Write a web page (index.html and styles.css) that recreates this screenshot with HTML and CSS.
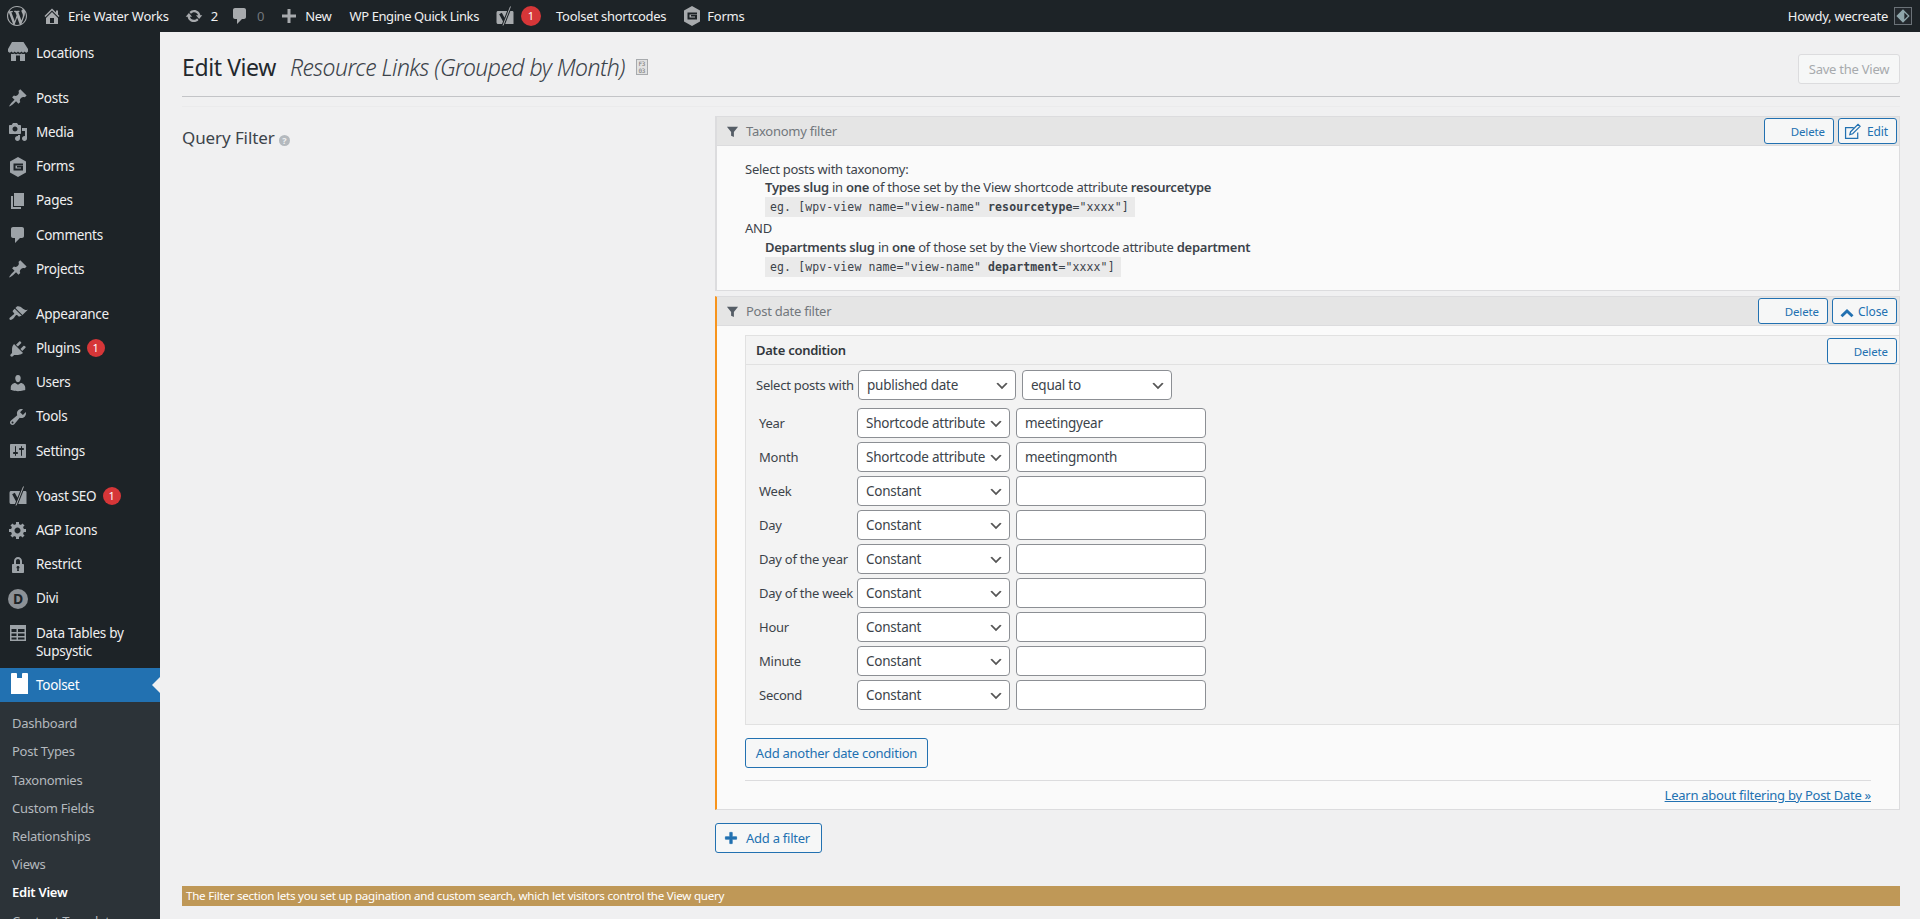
FILE: index.html
```html
<!DOCTYPE html>
<html>
<head>
  <meta charset="UTF-8" />
  <title>Edit View</title>
  <meta name="viewport" content="width=device-width, initial-scale=1" />
  <link rel="stylesheet" href="styles.css">
</head>
<body>
  <svg class="sprite" xmlns="http://www.w3.org/2000/svg">
    <symbol id="i-wp" viewBox="0 0 20 20"><path fill-rule="evenodd" d="M20 10c0-5.51-4.49-10-10-10C4.48 0 0 4.49 0 10c0 5.52 4.48 10 10 10 5.51 0 10-4.48 10-10zM7.78 15.37L4.37 6.22c.55-.02 1.17-.08 1.17-.08.5-.06.44-1.13-.06-1.11 0 0-1.45.11-2.37.11-.18 0-.37 0-.58-.01C4.12 2.69 6.87 1.11 10 1.11c2.33 0 4.45.87 6.05 2.34-.68-.11-1.65.39-1.65 1.58 0 .74.45 1.36.9 2.1.35.61.55 1.36.55 2.46 0 1.49-1.4 5-1.4 5l-3.03-8.37c.54-.02.82-.17.82-.17.5-.05.44-1.25-.06-1.22 0 0-1.44.12-2.38.12-.87 0-2.33-.12-2.33-.12-.5-.03-.56 1.2-.06 1.22l.92.08 1.26 3.41zM17.41 10c.24-.64.74-1.87.43-4.25.7 1.29 1.05 2.71 1.05 4.25 0 3.29-1.73 6.24-4.4 7.78.97-2.59 1.94-5.2 2.92-7.78zM6.1 18.09C3.12 16.65 1.11 13.53 1.11 10c0-1.3.23-2.48.72-3.59C3.25 10.3 4.67 14.2 6.1 18.09zm4.03-6.63l2.58 6.98c-.86.29-1.76.45-2.71.45-.79 0-1.57-.11-2.29-.33.81-2.38 1.62-4.74 2.42-7.1z"/></symbol>
    <symbol id="i-home" viewBox="0 0 20 20"><path fill-rule="evenodd" d="M16 8.5l1.53 1.53-1.06 1.06L10 4.62l-6.47 6.47-1.06-1.06L10 2.5l4 4v-2h2v4zm-6-2.46l6 5.99V18H4v-5.97zM12 17v-5H8v5h4z"/></symbol>
    <symbol id="i-update" viewBox="0 0 20 20"><path d="M10.2 3.28c3.53 0 6.43 2.61 6.92 6h2.08l-3.5 4-3.5-4h2.32c-.45-1.97-2.21-3.45-4.32-3.45-1.45 0-2.73.71-3.54 1.78L4.95 5.66C6.23 4.2 8.11 3.28 10.2 3.28zm-.4 13.44c-3.52 0-6.43-2.61-6.92-6H.8l3.5-4c1.17 1.33 2.33 2.67 3.5 4H5.48c.45 1.97 2.21 3.45 4.32 3.45 1.45 0 2.73-.71 3.54-1.78l1.71 1.95c-1.28 1.46-3.15 2.38-5.25 2.38z"/></symbol>
    <symbol id="i-comment" viewBox="0 0 20 20"><path d="M5 2h9c1.1 0 2 .9 2 2v7c0 1.1-.9 2-2 2h-2l-5 5v-5H5c-1.1 0-2-.9-2-2V4c0-1.1.9-2 2-2z"/></symbol>
    <symbol id="i-plus" viewBox="0 0 20 20"><path d="M17 8.500v3h-5.500V17h-3v-5.500H3v-3h5.500V3h3v5.500z"/></symbol>
    <symbol id="i-yoast" viewBox="0 0 20 20">
      <path d="M3.500 5H17c1 0 1.500.5 1.500 1.500V18H3.500C2 18 1.500 17.500 1.500 16V7C1.500 5.500 2 5 3.500 5z"/>
      <path fill="none" stroke="#1d2327" stroke-width="3" d="M5.500 7.500l4 7.500M15.500 .5L8 19.500"/>
      <path fill="none" stroke="#a7aaad" stroke-width="1" d="M15.500 .5L8 19.500"/>
    </symbol>
    <symbol id="i-forms" viewBox="0 0 20 20"><path fill-rule="evenodd" d="M10 0l8 4.500v11L10 20l-8-4.500v-11zM5.500 6.500h9.500v1.900H7.500v3.200h5.500v-1.200H9V9h6v4.400H5.500z"/></symbol>
    <symbol id="i-store" viewBox="0 0 20 20"><path d="M4 0h11.500L20 7v2.500c-1 1.500-2.500 1.500-3.300 0-.8 1.500-2.500 1.500-3.300 0-.8 1.500-2.500 1.500-3.400 0-.8 1.500-2.500 1.500-3.300 0-.8 1.500-2.500 1.500-3.300 0-.8 1.500-2.300 1.500-3.400 0V7z"/><path d="M3 11.800c1.200.5 2 .4 3.400-.2 1 .7 2.300.7 3.500 0 1.100.7 2.400.7 3.500 0 1.300.6 2.300.7 3.600.2V19h-5v-5.500H8V19H3z"/></symbol>
    <symbol id="i-post" viewBox="0 0 20 20"><path d="M10.440 3.020l1.820-1.820 6.360 6.350-1.830 1.820c-1.050-.68-2.480-.57-3.410.36l-.75.75c-.92.93-1.040 2.350-.35 3.410l-1.830 1.820-2.410-2.410-2.800 2.790c-.42.42-3.380 2.710-3.800 2.290s1.860-3.390 2.280-3.810l2.790-2.790L4.100 9.360l1.830-1.820c1.050.69 2.480.57 3.400-.36l.75-.75c.93-.92 1.050-2.350.36-3.410z"/></symbol>
    <symbol id="i-media" viewBox="0 0 20 20"><path fill-rule="evenodd" d="M13 11V4c0-.55-.45-1-1-1h-1.670L9 1H5L3.670 3H2c-.55 0-1 .45-1 1v7c0 .55.45 1 1 1h10c.55 0 1-.45 1-1zM7 4.500c1.380 0 2.500 1.120 2.500 2.500S8.380 9.500 7 9.500 4.500 8.380 4.500 7 5.620 4.500 7 4.500zM14 6h5v10.500c0 1.380-1.120 2.500-2.500 2.500S14 17.880 14 16.500s1.120-2.500 2.500-2.500c.17 0 .34.02.5.05V9h-3V6zm-4 8.050V13h2v3.500c0 1.380-1.120 2.500-2.500 2.500S7 17.880 7 16.500 8.120 14 9.500 14c.17 0 .34.02.5.05z"/></symbol>
    <symbol id="i-page" viewBox="0 0 20 20"><path d="M6 15V2h10v13H6zm-1 1h8v2H3V5h2v11z"/></symbol>
    <symbol id="i-brush" viewBox="0 0 20 20"><path d="M14.480 11.060L7.410 3.990l1.500-1.500c.5-.56 2.300-.47 3.510.32 1.210.8 1.430 1.280 2.910 2.100 1.180.64 2.450 1.260 4.450.85zm-.71.71L6.700 4.700 4.930 6.470c-.39.39-.39 1.020 0 1.410l1.060 1.060c.39.39.39 1.030 0 1.420-.6.6-1.430 1.110-2.210 1.690-.35.26-.7.53-1.010.84C1.430 13.230.99 14.870 1.700 15.580c.71.71 2.350.27 3.690-1.070.31-.31.58-.66.84-1.010.58-.78 1.090-1.610 1.690-2.210.39-.39 1.020-.39 1.410 0l1.060 1.060c.39.39 1.020.39 1.410 0z"/></symbol>
    <symbol id="i-plug" viewBox="0 0 20 20"><path d="M13.110 4.360L9.870 7.600 8 5.730l3.240-3.240c.35-.34 1.050-.2 1.560.32.52.51.66 1.210.31 1.550zm-8 1.770l.91-1.120 9.010 9.010-1.190.84c-.71.71-2.630 1.160-3.820 1.160H6.140L4.900 17.260c-.59.59-1.540.59-2.120 0-.59-.58-.59-1.530 0-2.120l1.240-1.240v-3.880c0-1.130.4-3.190 1.090-3.890zm7.260 3.970l3.240-3.240c.34-.35 1.040-.21 1.550.31.52.51.66 1.210.31 1.550l-3.240 3.250z"/></symbol>
    <symbol id="i-user" viewBox="0 0 20 20"><path d="M10 9.250c-2.270 0-2.730-3.440-2.730-3.440C7 4.020 7.820 2 9.970 2c2.160 0 2.980 2.020 2.710 3.810 0 0-.41 3.440-2.68 3.440zm0 2.570L12.720 10c2.390 0 4.520 2.330 4.520 4.530v2.490s-3.650 1.130-7.240 1.130c-3.650 0-7.240-1.130-7.240-1.130v-2.490c0-2.250 1.940-4.480 4.470-4.480z"/></symbol>
    <symbol id="i-tool" viewBox="0 0 20 20"><path fill-rule="evenodd" d="M16.680 9.770c-1.340 1.340-3.300 1.670-4.950.99l-5.410 6.520c-.99.99-2.590.99-3.580 0s-.99-2.59 0-3.570l6.520-5.420c-.68-1.650-.35-3.610.99-4.950 1.280-1.280 3.120-1.620 4.720-1.060l-2.890 2.890 2.820 2.820 2.860-2.870c.53 1.580.18 3.390-1.080 4.650zM3.810 16.210c.4.39 1.040.39 1.430 0 .4-.4.4-1.040 0-1.430-.39-.4-1.030-.4-1.430 0-.39.39-.39 1.030 0 1.430z"/></symbol>
    <symbol id="i-settings" viewBox="0 0 20 20"><path fill-rule="evenodd" d="M18 16V4c0-.55-.45-1-1-1H3c-.55 0-1 .45-1 1v12c0 .55.45 1 1 1h14c.55 0 1-.45 1-1zM8 11h1c.55 0 1 .45 1 1s-.45 1-1 1H8v1.500c0 .28-.22.5-.5.5s-.5-.22-.5-.5V13H6c-.55 0-1-.45-1-1s.45-1 1-1h1V5.500c0-.28.22-.5.5-.5s.5.22.5.5V11zm5-2h-1c-.55 0-1-.45-1-1s.45-1 1-1h1V5.500c0-.28.22-.5.5-.5s.5.22.5.5V7h1c.55 0 1 .45 1 1s-.45 1-1 1h-1v5.500c0 .28-.22.5-.5.5s-.5-.22-.5-.5V9z"/></symbol>
    <symbol id="i-gear" viewBox="0 0 20 20"><path fill-rule="evenodd" d="M18 12h-2.180c-.17.7-.44 1.350-.81 1.930l1.540 1.540-2.100 2.100-1.540-1.540c-.58.36-1.230.63-1.910.79V19H8v-2.180c-.68-.16-1.330-.43-1.910-.79l-1.540 1.540-2.120-2.120 1.540-1.540c-.36-.58-.63-1.230-.79-1.910H1V9.030h2.170c.16-.7.44-1.350.8-1.940L2.430 5.550l2.100-2.100 1.540 1.540c.58-.37 1.240-.64 1.930-.81V2h3v2.180c.68.16 1.330.43 1.910.79l1.540-1.540 2.120 2.120-1.540 1.540c.36.59.64 1.240.8 1.940H18V12zm-8.500 1.500c1.660 0 3-1.340 3-3s-1.340-3-3-3-3 1.340-3 3 1.340 3 3 3z"/></symbol>
    <symbol id="i-lock" viewBox="0 0 20 20"><path fill-rule="evenodd" d="M14 9h1c.55 0 1 .45 1 1v7c0 .55-.45 1-1 1H5c-.55 0-1-.45-1-1v-7c0-.55.45-1 1-1h1V6c0-2.210 1.790-4 4-4s4 1.790 4 4v3zm-2 0V6c0-1.100-.9-2-2-2s-2 .9-2 2v3h4zm-1 7l-.36-2.150c.51-.24.86-.75.86-1.350 0-.83-.67-1.500-1.500-1.500s-1.500.67-1.500 1.500c0 .6.35 1.110.86 1.350L9 16h2z"/></symbol>
    <symbol id="i-table" viewBox="0 0 20 20"><path fill-rule="evenodd" d="M2 2h16v16H2zM3.500 6v3h5V6zm6.500 0v3h6.500V6zM3.500 10.500v2.500h5v-2.500zm6.500 0v2.500h6.500v-2.500zM3.500 14.500v2h5v-2zm6.500 0v2h6.500v-2z"/></symbol>
    <symbol id="i-toolset" viewBox="0 0 17 21"><path d="M0 1.200C0 .4.4 0 1.200 0h3.600c.8 0 1.200.4 1.200 1.200V5h5V1.200c0-.8.4-1.200 1.200-1.200h3.600c.8 0 1.200.4 1.200 1.200V21H0z"/></symbol>
    <symbol id="i-funnel" viewBox="0 0 14 14"><path d="M1 2h12L8.500 7.500V13l-3-1.500V7.500z"/></symbol>
    <symbol id="i-edit" viewBox="0 0 20 20"><path fill="none" stroke="currentColor" stroke-width="1.300" d="M15.500 11v6.300H2.700V6h8.500M8 10.200L15.800 2.400l2.200 2.200-7.800 7.800-3 .8z"/></symbol>
    <symbol id="i-chevron" viewBox="0 0 14 10"><path d="M7 1l6.500 6.300-2 2L7 5 2.500 9.300l-2-2z"/></symbol>
  </svg>

  <header class="adminbar">
    <div class="bar-group">
      <svg class="bar-ico bar-logo"><use href="#i-wp"/></svg>
      <svg class="bar-ico bar-home"><use href="#i-home"/></svg>
      <span class="bar-site">Erie Water Works</span>
      <svg class="bar-ico bar-update"><use href="#i-update"/></svg>
      <span class="bar-count">2</span>
      <svg class="bar-ico bar-comment"><use href="#i-comment"/></svg>
      <span class="bar-zero">0</span>
      <svg class="bar-ico bar-plus"><use href="#i-plus"/></svg>
      <span class="bar-new">New</span>
      <span class="bar-engine">WP Engine Quick Links</span>
      <svg class="bar-ico bar-yoast"><use href="#i-yoast"/></svg>
      <span class="badge bar-badge">1</span>
      <span class="bar-shortcodes">Toolset shortcodes</span>
      <svg class="bar-ico bar-forms"><use href="#i-forms"/></svg>
      <span>Forms</span>
    </div>
    <div class="bar-group">
      <span>Howdy, wecreate</span>
      <span class="avatar"><svg viewBox="0 0 18 18"><path fill="#8fa6ab" fill-rule="evenodd" d="M9 1.500L16.500 9 9 16.500 1.500 9zM10.500 5v8l4-4z"/></svg></span>
    </div>
  </header>

  <div class="shell">
    <nav class="sidebar">
      <a class="menu-item"><svg class="menu-ico store-ico"><use href="#i-store"/></svg>Locations</a>
      <div class="menu-sep"></div>
      <a class="menu-item"><svg class="menu-ico"><use href="#i-post"/></svg>Posts</a>
      <a class="menu-item"><svg class="menu-ico"><use href="#i-media"/></svg>Media</a>
      <a class="menu-item"><svg class="menu-ico"><use href="#i-forms"/></svg>Forms</a>
      <a class="menu-item"><svg class="menu-ico"><use href="#i-page"/></svg>Pages</a>
      <a class="menu-item"><svg class="menu-ico"><use href="#i-comment"/></svg>Comments</a>
      <a class="menu-item"><svg class="menu-ico"><use href="#i-post"/></svg>Projects</a>
      <div class="menu-sep"></div>
      <a class="menu-item"><svg class="menu-ico"><use href="#i-brush"/></svg>Appearance</a>
      <a class="menu-item"><svg class="menu-ico"><use href="#i-plug"/></svg>Plugins <span class="badge">1</span></a>
      <a class="menu-item"><svg class="menu-ico"><use href="#i-user"/></svg>Users</a>
      <a class="menu-item"><svg class="menu-ico"><use href="#i-tool"/></svg>Tools</a>
      <a class="menu-item"><svg class="menu-ico"><use href="#i-settings"/></svg>Settings</a>
      <div class="menu-sep"></div>
      <a class="menu-item"><svg class="menu-ico"><use href="#i-yoast"/></svg>Yoast SEO <span class="badge">1</span></a>
      <a class="menu-item"><svg class="menu-ico"><use href="#i-gear"/></svg>AGP Icons</a>
      <a class="menu-item"><svg class="menu-ico"><use href="#i-lock"/></svg>Restrict</a>
      <a class="menu-item"><span class="divi-ico">D</span>Divi</a>
      <a class="menu-item menu-tall"><svg class="menu-ico"><use href="#i-table"/></svg><span>Data Tables by<br>Supsystic</span></a>
      <a class="menu-item menu-current"><svg class="menu-ico toolset-ico"><use href="#i-toolset"/></svg>Toolset</a>
      <ul class="submenu">
        <li>Dashboard</li>
        <li>Post Types</li>
        <li>Taxonomies</li>
        <li>Custom Fields</li>
        <li>Relationships</li>
        <li>Views</li>
        <li class="sub-current">Edit View</li>
        <li>Content Templates</li>
      </ul>
    </nav>

    <main class="content">
      <div class="page-head">
        <h1>Edit View</h1>
        <span class="view-title">Resource Links (Grouped by Month)</span>
        <span class="id-ico">F3<br>03</span>
        <button type="button" class="save-btn">Save the View</button>
      </div>
      <div class="head-line"></div>

      <section class="filter-section">
        <h2>Query Filter <span class="help-ico">?</span></h2>

        <div class="filter-col">
          <div class="panel">
            <div class="panel-head">
              <svg class="funnel"><use href="#i-funnel"/></svg>
              <span class="panel-title">Taxonomy filter</span>
              <button type="button" class="btn btn-delete">Delete</button>
              <button type="button" class="btn btn-edit"><svg><use href="#i-edit"/></svg>Edit</button>
            </div>
            <div class="panel-body summary">
              <p>Select posts with taxonomy:</p>
              <p class="indent"><strong>Types slug</strong> in <strong>one</strong> of those set by the View shortcode attribute <strong>resourcetype</strong></p>
              <code>eg. [wpv-view name="view-name" <strong>resourcetype</strong>="xxxx"]</code>
              <p class="and">AND</p>
              <p class="indent"><strong>Departments slug</strong> in <strong>one</strong> of those set by the View shortcode attribute <strong>department</strong></p>
              <code>eg. [wpv-view name="view-name" <strong>department</strong>="xxxx"]</code>
            </div>
          </div>

          <div class="panel panel-open">
            <div class="panel-head">
              <svg class="funnel"><use href="#i-funnel"/></svg>
              <span class="panel-title">Post date filter</span>
              <button type="button" class="btn btn-delete">Delete</button>
              <button type="button" class="btn btn-close"><svg><use href="#i-chevron"/></svg>Close</button>
            </div>
            <div class="panel-body editor">
              <div class="date-box">
                <div class="date-head">
                  <strong>Date condition</strong>
                  <button type="button" class="btn btn-delete">Delete</button>
                </div>
                <div class="date-body">
                  <div class="date-first">
                    <label>Select posts with</label>
                    <select class="sel-type"><option>published date</option></select>
                    <select class="sel-compare"><option>equal to</option></select>
                  </div>
                  <div class="date-row"><label>Year</label><select><option>Shortcode attribute</option></select><input type="text" value="meetingyear"></div>
                  <div class="date-row"><label>Month</label><select><option>Shortcode attribute</option></select><input type="text" value="meetingmonth"></div>
                  <div class="date-row"><label>Week</label><select><option>Constant</option></select><input type="text"></div>
                  <div class="date-row"><label>Day</label><select><option>Constant</option></select><input type="text"></div>
                  <div class="date-row"><label>Day of the year</label><select><option>Constant</option></select><input type="text"></div>
                  <div class="date-row"><label>Day of the week</label><select><option>Constant</option></select><input type="text"></div>
                  <div class="date-row"><label>Hour</label><select><option>Constant</option></select><input type="text"></div>
                  <div class="date-row"><label>Minute</label><select><option>Constant</option></select><input type="text"></div>
                  <div class="date-row"><label>Second</label><select><option>Constant</option></select><input type="text"></div>
                </div>
              </div>
              <button type="button" class="btn btn-add-date">Add another date condition</button>
              <div class="learn-row"><a href="#">Learn about filtering by Post Date »</a></div>
            </div>
          </div>

          <button type="button" class="btn btn-add-filter"><svg><use href="#i-plus"/></svg>Add a filter</button>
        </div>
      </section>

      <div class="notice">The Filter section lets you set up pagination and custom search, which let visitors control the View query</div>
    </main>
  </div>
</body>
</html>
```

FILE: styles.css
```css
html, body {
  height: 100%;
}

body {
  margin: 0;
  height: 919px;
  overflow: hidden;
  background-color: #f0f0f1;
  color: #3c434a;
  font-family: "Noto Sans", sans-serif;
  font-size: 13px;
  letter-spacing: -0.25px;
}

.sprite {
  display: none;
}

.badge {
  display: inline-block;
  width: 18px;
  height: 18px;
  border-radius: 50%;
  background-color: #d63638;
  color: #fff;
  font-size: 11px;
  line-height: 18px;
  text-align: center;
  margin-left: 3px;
  letter-spacing: 0;
}

/* top bar */
.adminbar {
  height: 32px;
  background-color: #1d2327;
  color: #f0f0f1;
  display: flex;
  justify-content: space-between;
  align-items: center;
  padding: 0 8px 0 7px;
}

.bar-group {
  display: flex;
  align-items: center;
}

.bar-ico {
  width: 20px;
  height: 20px;
  fill: #a7aaad;
  flex: none;
}

.bar-home {
  margin-left: 15px;
  margin-right: 6px;
}

.bar-update {
  width: 18px;
  height: 18px;
  margin-left: 16px;
  margin-right: 8px;
}

.bar-count {
  margin-right: 12px;
}

.bar-comment {
  margin-right: 7px;
}

.bar-zero {
  color: #72777c;
  margin-right: 15px;
}

.bar-plus {
  margin-right: 6px;
}

.bar-new {
  margin-right: 18px;
}

.bar-engine {
  margin-right: 16px;
  letter-spacing: -0.42px;
}

.bar-yoast {
  margin-right: 6px;
}

.bar-badge {
  width: 20px;
  height: 20px;
  line-height: 20px;
  margin-left: 0;
  margin-right: 15px;
}

.bar-shortcodes {
  margin-right: 16px;
}

.bar-forms {
  margin-right: 5px;
}

.avatar {
  width: 16px;
  height: 16px;
  margin-left: 6px;
  border: 1px solid #6b7278;
  background-color: #23282d;
  display: block;
}

.avatar svg {
  display: block;
  width: 16px;
  height: 16px;
}

/* left menu */
.shell {
  display: grid;
  grid-template-columns: 160px 1fr;
  height: 887px;
}

.sidebar {
  background-color: #1d2327;
  padding-top: 4px;
  overflow: hidden;
}

.menu-item {
  display: flex;
  align-items: center;
  box-sizing: border-box;
  height: 34.2px;
  padding: 0 0 1px 36px;
  position: relative;
  color: #f0f0f1;
  font-size: 13.5px;
  letter-spacing: -0.3px;
  white-space: pre;
}

.menu-ico {
  position: absolute;
  left: 8px;
  top: 7px;
  width: 20px;
  height: 20px;
  fill: #9ca2a7;
}

.store-ico {
  top: 6px;
}

.menu-sep {
  height: 11px;
}

.menu-tall {
  height: 52px;
  line-height: 18px;
}

.divi-ico {
  position: absolute;
  left: 8px;
  top: 7px;
  width: 20px;
  height: 20px;
  border-radius: 50%;
  background-color: #8c9196;
  color: #1d2327;
  font-size: 14px;
  font-weight: 700;
  line-height: 20px;
  text-align: center;
}

.menu-current {
  background-color: #2271b1;
  color: #fff;
}

.menu-current::after {
  content: "";
  position: absolute;
  right: 0;
  top: 9px;
  border: 8px solid transparent;
  border-left-width: 0;
  border-right-color: #f0f0f1;
}

.toolset-ico {
  left: 11px;
  top: 5px;
  width: 17px;
  height: 21px;
  fill: #fff;
}

.submenu {
  list-style: none;
  margin: 0;
  padding: 7px 0 0;
  background-color: #2c3338;
  color: #b4b9be;
}

.submenu li {
  height: 28.2px;
  line-height: 28px;
  padding-left: 12px;
}

.submenu .sub-current {
  color: #fff;
  font-weight: 600;
}

/* page */
.content {
  padding: 22px 20px 0 22px;
  overflow: hidden;
}

.page-head {
  display: flex;
  align-items: center;
  height: 30px;
}

h1 {
  margin: 0 0 5px;
  font-size: 23px;
  font-weight: 400;
  color: #23282d;
  letter-spacing: -0.4px;
}

.view-title {
  margin: 0 0 5px 14px;
  font-size: 23px;
  font-style: italic;
  font-weight: 300;
  color: #3c434a;
  letter-spacing: -0.54px;
}

.id-ico {
  width: 10px;
  height: 14px;
  margin: 0 0 4px 11px;
  border: 1px solid #a7aaad;
  background-color: #e2e2e2;
  color: #777;
  font-family: "DejaVu Sans Mono", monospace;
  font-size: 6px;
  line-height: 7px;
  letter-spacing: -0.2px;
  text-align: center;
}

.save-btn {
  margin-left: auto;
  width: 102px;
  height: 30px;
  padding: 0;
  border: 1px solid #dcdcde;
  border-radius: 3px;
  background-color: #f6f7f7;
  color: #a7aaad;
  font: inherit;
  letter-spacing: inherit;
}

.head-line {
  height: 9px;
  margin-top: 12px;
  border-top: 1px solid #c3c4c7;
  border-bottom: 1px solid #ebebec;
}

.filter-section {
  display: grid;
  grid-template-columns: 533px 1fr;
  margin-top: 9px;
}

h2 {
  margin: 10px 0 0;
  font-size: 17px;
  font-weight: 400;
  color: #3c434a;
  letter-spacing: -0.1px;
}

.help-ico {
  display: inline-block;
  width: 11px;
  height: 11px;
  border-radius: 50%;
  background-color: #b4b9be;
  color: #f0f0f1;
  font-size: 9px;
  font-weight: 700;
  line-height: 11px;
  text-align: center;
  letter-spacing: 0;
  vertical-align: 0;
}

.panel {
  border: 1px solid #dcdcde;
  border-left-width: 2px;
  background-color: #fafafa;
  margin-bottom: 5px;
}

.panel-open {
  border-left: 2px solid #f7941d;
  margin-bottom: 13px;
}

.panel-head {
  display: flex;
  align-items: center;
  gap: 4px;
  height: 28px;
  padding-right: 2px;
  background-color: #e5e5e5;
  border-bottom: 1px solid #dcdcde;
}

.funnel {
  width: 13px;
  height: 13px;
  margin-left: 9px;
  margin-right: 3px;
  margin-top: 1px;
  fill: #555d66;
}

.panel-title {
  margin-right: auto;
  color: #72777c;
}

.btn {
  height: 26px;
  padding: 0;
  border: 1px solid #2271b1;
  border-radius: 3px;
  background-color: #f6f7f7;
  color: #2271b1;
  font: inherit;
  font-size: 12px;
  letter-spacing: -0.1px;
  display: inline-flex;
  align-items: center;
  justify-content: flex-end;
  box-sizing: border-box;
}

.btn-delete {
  width: 70px;
  padding-right: 8px;
  font-size: 11.5px;
}

.btn-edit {
  width: 59px;
  padding-right: 8px;
}

.btn-edit svg {
  width: 19px;
  height: 19px;
  margin-right: 5px;
  color: #2271b1;
}

.btn-close {
  width: 65px;
  padding-right: 8px;
}

.btn-close svg {
  width: 14px;
  height: 10px;
  margin: 3px 4px 0 0;
  fill: #2271b1;
}

.summary {
  height: 144px;
  box-sizing: border-box;
  padding: 14px 0 0 28px;
}

.summary p {
  margin: 0;
  line-height: 18px;
}

.summary .indent {
  margin-left: 20px;
  line-height: 19px;
}

.summary .and {
  line-height: 20px;
}

.summary strong {
  font-weight: 600;
}

.summary code {
  display: table;
  margin: 0 0 1px 20px;
  padding: 0 6px 0 5px;
  height: 20px;
  line-height: 20px;
  background-color: #eaeaea;
  font-family: "DejaVu Sans Mono", monospace;
  font-size: 11.5px;
  letter-spacing: 0.11px;
}

.editor {
  height: 483px;
  box-sizing: border-box;
  padding: 9px 0 0 28px;
}

.date-box {
  height: 390px;
  box-sizing: border-box;
  border: 1px solid #e1e1e1;
  border-right: 0;
  background-color: #f3f3f3;
}

.date-head {
  display: flex;
  justify-content: space-between;
  align-items: center;
  height: 28px;
  padding: 0 2px 0 10px;
  border-bottom: 1px solid #e1e1e1;
}

.date-head .btn {
  margin-top: 2px;
}

.date-head strong {
  font-weight: 600;
  color: #32373c;
}

.date-body {
  padding: 5px 0 0 10px;
}

.date-first,
.date-row {
  display: flex;
  align-items: center;
}

.date-first {
  gap: 6px;
  margin-bottom: 8px;
}

.date-first label {
  width: 96px;
  white-space: nowrap;
}

.date-row {
  margin-bottom: 4px;
  padding-left: 3px;
}

.date-row label {
  width: 98px;
  white-space: nowrap;
}

select,
input {
  box-sizing: border-box;
  height: 30px;
  margin: 0;
  padding: 0 8px;
  border: 1px solid #8c8f94;
  border-radius: 4px;
  background-color: #fff;
  color: #3c434a;
  font: inherit;
  font-size: 13.5px;
  letter-spacing: inherit;
}

select {
  appearance: none;
  padding-right: 20px;
  background-image: url("data:image/svg+xml;charset=US-ASCII,%3Csvg%20width%3D%2220%22%20height%3D%2220%22%20xmlns%3D%22http%3A%2F%2Fwww.w3.org%2F2000%2Fsvg%22%3E%3Cpath%20d%3D%22M5%206l5%205%205-5%202%201-7%207-7-7%202-1z%22%20fill%3D%22%23555%22%2F%3E%3C%2Fsvg%3E");
  background-repeat: no-repeat;
  background-position: right 5px top 55%;
  background-size: 16px 16px;
}

.date-row select {
  width: 153px;
}

.date-row input {
  width: 190px;
  margin-left: 6px;
}

.date-first .sel-type {
  width: 158px;
}

.date-first .sel-compare {
  width: 150px;
}

.btn-add-date {
  height: 30px;
  width: 183px;
  margin-top: 13px;
  justify-content: center;
  font-size: 13px;
  letter-spacing: -0.25px;
}

.learn-row {
  margin: 12px 28px 0 0;
  border-top: 1px solid #dcdcde;
  padding-top: 5px;
  text-align: right;
}

.learn-row a {
  color: #2271b1;
}

.btn-add-filter {
  height: 30px;
  width: 107px;
  justify-content: flex-start;
  padding-left: 7px;
  font-size: 13px;
  letter-spacing: -0.25px;
}

.btn-add-filter svg {
  width: 16px;
  height: 16px;
  margin-right: 7px;
  fill: #2271b1;
  stroke: #2271b1;
  stroke-width: 1;
}

.notice {
  height: 20px;
  margin-top: 33px;
  padding-left: 4px;
  background-color: #bf9857;
  color: #fff;
  font-size: 11.6px;
  line-height: 20px;
}
```
